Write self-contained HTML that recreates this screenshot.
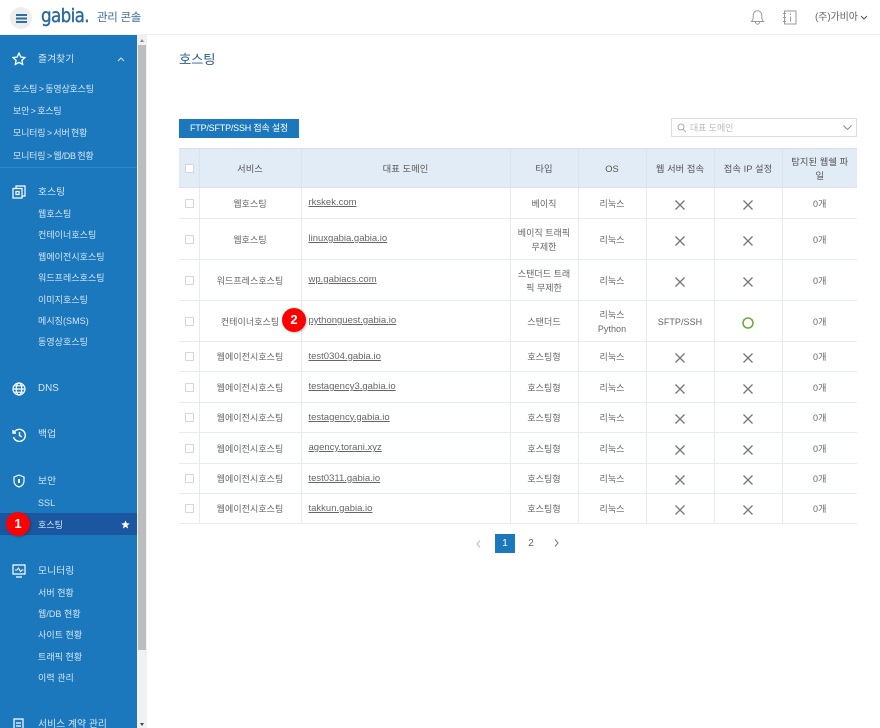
<!DOCTYPE html>
<html lang="ko"><head><meta charset="utf-8"><title>호스팅</title>
<style>
*{box-sizing:border-box}
html,body{margin:0;padding:0;width:880px;height:728px;overflow:hidden;background:#fff;font-family:"Liberation Sans","Noto Sans CJK KR",sans-serif;color:#555;font-size:9px}
.a{position:absolute;white-space:nowrap}
#top{position:absolute;left:0;top:0;width:880px;height:35px;background:#fff;border-bottom:1px solid #f0f0f0}
#side{position:absolute;left:0;top:35px;width:137px;height:693px;background:#1b78bc;overflow:hidden}
.s{position:absolute;color:#d4e6f4;font-size:9px;line-height:12px;white-space:nowrap;letter-spacing:.05px;margin-top:1px}
.f{word-spacing:-.8px;letter-spacing:-.2px}
.h{font-size:9.800px}
#sb{position:absolute;left:137px;top:35px;width:10px;height:693px;background:#f1f1f1}
#sb i{position:absolute;left:1px;top:10px;width:8px;height:605px;background:#bdbdbd}
table{position:absolute;left:179px;top:148px;width:678px;border-collapse:collapse;table-layout:fixed;border-top:1px solid #d8e1ea}
td,th{border:1px solid #e8ebef;border-top:0;padding:1px 4px 0;text-align:center;font-weight:400;font-size:9px;line-height:14px;color:#666;overflow:hidden;letter-spacing:.05px}
td:first-child,th:first-child{border-left:0;padding:0}
td:last-child,th:last-child{border-right:0}
th{background:#e2ecf6;color:#555;height:39px;border-color:#d8e3ee;padding:1px 4px 0;font-size:9.300px}
td.d{text-align:left;padding:0 7px;color:#666;font-size:9.500px;letter-spacing:0}
td.d u{position:relative;top:0;text-underline-offset:1px}
.c{display:block;width:9px;height:9px;margin:0 0 0 6px;border:1px solid #d6d6d6;border-radius:1px;background:#fff}
svg{display:block}
td svg{margin:2px auto 0}
.b{position:absolute;border-radius:50%;background:#f00;color:#fff;font:700 13px/24px "Liberation Sans",sans-serif;text-align:center;width:24px;height:24px;box-shadow:1px 1px 2px rgba(0,0,0,.25)}
</style></head><body>
<div id="top">
<div class="a" style="left:10px;top:7px;width:22px;height:22px;border-radius:50%;background:#eee"></div>
<div class="a" style="left:16px;top:14px;width:11px;height:1.500px;background:#2b6fa8;box-shadow:0 3.500px 0 #2b6fa8,0 7px 0 #2b6fa8"></div>
<div class="a" style="left:41px;top:4px;font:400 19px/24px 'DejaVu Sans',sans-serif;color:#2a6aa3;letter-spacing:-.7px;-webkit-text-stroke:.4px #2a6aa3;transform:scaleX(.88);transform-origin:left">gabia.</div>
<div class="a" style="left:97px;top:10px;font-size:11.500px;line-height:16px;color:#3d6f9c;letter-spacing:-.3px">관리 콘솔</div>
<svg class="a" style="left:750px;top:8px" width="15" height="18" viewBox="0 0 15 18" fill="none" stroke="#9a9a9a" stroke-width="1"><path d="M1.500 13.500c1.300-1.200 1.700-2 1.700-4.500V7a4.300 4.300 0 0 1 8.600 0v2c0 2.500.4 3.300 1.700 4.500z"/><path d="M5.500 14c0 3 4 3 4 0"/></svg>
<svg class="a" style="left:782px;top:10px" width="15" height="15" viewBox="0 0 15 15" fill="none" stroke="#9a9a9a" stroke-width="1"><path d="M2.500 1h11.500v13H2.500z"/><path d="M1 3.500h3M1 7.500h3M1 11.500h3M8.500 6.500v5M8.500 3.500v1.500"/></svg>
<div class="a" style="left:815px;top:11px;font-size:10px;line-height:14px;color:#666;letter-spacing:-.1px">(주)가비아</div>
<svg class="a" style="left:860px;top:15px" width="8" height="5" viewBox="0 0 8 5" fill="none" stroke="#555" stroke-width="1"><path d="M1 1l3 3 3-3"/></svg>
</div>
<div id="side">
<svg class="a" style="left:12px;top:17px" width="14" height="14" viewBox="0 0 14 14" fill="none" stroke="#fff" stroke-width="1.300"><path d="M7 1.200l1.800 3.800 4.100.5-3 2.800.8 4.100L7 10.400l-3.700 2 .8-4.100-3-2.800 4.100-.5z"/></svg>
<div class="s h" style="left:38px;top:18px">즐겨찾기</div>
<svg class="a" style="left:117px;top:22px" width="8" height="5" viewBox="0 0 8 5" fill="none" stroke="#d4e6f4" stroke-width="1"><path d="M1 4l3-3 3 3"/></svg>
<div class="s f" style="left:13px;top:47px">호스팅 &gt; 동영상호스팅</div>
<div class="s f" style="left:13px;top:69px">보안 &gt; 호스팅</div>
<div class="s f" style="left:13px;top:91px">모니터링 &gt; 서버 현황</div>
<div class="s f" style="left:13px;top:114px">모니터링 &gt; 웹/DB 현황</div>
<div class="a" style="left:0;top:132px;width:137px;height:1px;background:#2f86c4"></div>
<svg class="a" style="left:12px;top:150px" width="14" height="14" viewBox="0 0 14 14" fill="none" stroke="#fff" stroke-width="1.200"><path d="M4 3V1h9v10h-3"/><path d="M1 3.500h9v9.500H1z"/><path d="M4 6.500h3v3H4z"/></svg>
<div class="s h" style="left:38px;top:151px">호스팅</div>
<div class="s" style="left:38px;top:172px">웹호스팅</div>
<div class="s" style="left:38px;top:193px">컨테이너호스팅</div>
<div class="s" style="left:38px;top:215px">웹에이전시호스팅</div>
<div class="s" style="left:38px;top:236px">워드프레스호스팅</div>
<div class="s" style="left:38px;top:258px">이미지호스팅</div>
<div class="s" style="left:38px;top:279px">메시징(SMS)</div>
<div class="s" style="left:38px;top:300px">동영상호스팅</div>
<svg class="a" style="left:12px;top:347px" width="14" height="14" viewBox="0 0 14 14" fill="none" stroke="#fff" stroke-width="1.200"><circle cx="7" cy="7" r="6"/><ellipse cx="7" cy="7" rx="2.800" ry="6"/><path d="M1 7h12M2 3.800h10M2 10.200h10"/></svg>
<div class="s h" style="left:38px;top:347px">DNS</div>
<svg class="a" style="left:12px;top:393px" width="14" height="14" viewBox="0 0 14 14" fill="none" stroke="#fff" stroke-width="1.400"><path d="M2 4.500A6 6 0 1 1 1.500 9"/><path d="M1 2v3h3M7.500 4v3.500l2.300 1.300"/></svg>
<div class="s h" style="left:38px;top:393px">백업</div>
<svg class="a" style="left:13px;top:439px" width="12" height="14" viewBox="0 0 12 14" fill="none" stroke="#fff" stroke-width="1.200"><path d="M6 1l5 2v4c0 3-2 5-5 6-3-1-5-3-5-6V3z"/><path d="M6 5v4" stroke-width="2"/></svg>
<div class="s h" style="left:38px;top:440px">보안</div>
<div class="s" style="left:38px;top:461px">SSL</div>
<div class="a" style="left:0;top:478px;width:137px;height:22px;background:#1b57a0"></div>
<div class="s" style="left:38px;top:483px">호스팅</div>
<svg class="a" style="left:121px;top:485px" width="9" height="9" viewBox="0 0 9 9" fill="#fff"><path d="M4.500.5l1.200 2.700 3 .3-2.300 2 .7 3-2.600-1.600L1.900 8.500l.7-3-2.300-2 3-.3z"/></svg>
<svg class="a" style="left:12px;top:529px" width="14" height="14" viewBox="0 0 14 14" fill="none" stroke="#fff" stroke-width="1.200"><path d="M1 1h12v9H1zM4 13h6"/><path d="M3 6h2l1.500-2 2 3.500L10 6h1.500" stroke-width="1"/></svg>
<div class="s h" style="left:38px;top:530px">모니터링</div>
<div class="s" style="left:38px;top:551px">서버 현황</div>
<div class="s" style="left:38px;top:572px">웹/DB 현황</div>
<div class="s" style="left:38px;top:593px">사이트 현황</div>
<div class="s" style="left:38px;top:615px">트래픽 현황</div>
<div class="s" style="left:38px;top:636px">이력 관리</div>
<svg class="a" style="left:13px;top:683px" width="12" height="14" viewBox="0 0 12 14" fill="none" stroke="#fff" stroke-width="1.200"><path d="M1 1h9v12H1zM3 5h5M3 8h5"/></svg>
<div class="s h" style="left:38px;top:683px">서비스 계약 관리</div>
</div>
<div id="sb"><i></i>
<div class="a" style="left:3px;top:4px;border:2px solid transparent;border-bottom:3px solid #888;border-top:0"></div>
<div class="a" style="left:3px;top:688px;border:2px solid transparent;border-top:3px solid #444;border-bottom:0"></div>
</div>
<div class="a" style="left:179px;top:51px;font-size:13.300px;line-height:18px;color:#2a5d8f;letter-spacing:-.1px">호스팅</div>
<div class="a" style="left:179px;top:119px;width:120px;height:19px;background:#1b78bc;color:#fff;font-size:9px;line-height:19px;text-align:center;letter-spacing:-.2px">FTP/SFTP/SSH 접속 설정</div>
<div class="a" style="left:671px;top:118px;width:186px;height:19px;border:1px solid #ddd;background:#fff"></div>
<svg class="a" style="left:677px;top:123px" width="10" height="10" viewBox="0 0 10 10" fill="none" stroke="#aaa" stroke-width="1"><circle cx="4" cy="4" r="3"/><path d="M6.300 6.300L9 9"/></svg>
<div class="a" style="left:690px;top:121px;color:#bbb;font-size:9px;line-height:14px;letter-spacing:-.1px">대표 도메인</div>
<svg class="a" style="left:843px;top:125px" width="9" height="5" viewBox="0 0 9 5" fill="none" stroke="#888" stroke-width="1"><path d="M.5.500l4 4 4-4"/></svg>
<table><colgroup><col style="width:20px"><col style="width:102px"><col style="width:209px"><col style="width:68px"><col style="width:68px"><col style="width:68px"><col style="width:68px"><col style="width:75px"></colgroup>
<tr><th><span class="c"></span></th><th>서비스</th><th>대표 도메인</th><th>타입</th><th>OS</th><th>웹 서버 접속</th><th>접속 IP 설정</th><th>탐지된 웹쉘 파<br>일</th></tr>
<tr style="height:31px"><td><span class="c"></span></td><td>웹호스팅</td><td class="d"><u>rkskek.com</u></td><td>베이직</td><td>리눅스</td><td><svg width="10" height="10" viewBox="0 0 10 10" stroke="#777" stroke-width="1.300"><path d="M.5.500l9 9M9.500.500l-9 9"/></svg></td><td><svg width="10" height="10" viewBox="0 0 10 10" stroke="#777" stroke-width="1.300"><path d="M.5.500l9 9M9.500.500l-9 9"/></svg></td><td>0개</td></tr>
<tr style="height:41px"><td><span class="c"></span></td><td>웹호스팅</td><td class="d"><u>linuxgabia.gabia.io</u></td><td>베이직 트래픽 무제한</td><td>리눅스</td><td><svg width="10" height="10" viewBox="0 0 10 10" stroke="#777" stroke-width="1.300"><path d="M.5.500l9 9M9.500.500l-9 9"/></svg></td><td><svg width="10" height="10" viewBox="0 0 10 10" stroke="#777" stroke-width="1.300"><path d="M.5.500l9 9M9.500.500l-9 9"/></svg></td><td>0개</td></tr>
<tr style="height:41px"><td><span class="c"></span></td><td>워드프레스호스팅</td><td class="d"><u>wp.gabiacs.com</u></td><td>스탠더드 트래픽 무제한</td><td>리눅스</td><td><svg width="10" height="10" viewBox="0 0 10 10" stroke="#777" stroke-width="1.300"><path d="M.5.500l9 9M9.500.500l-9 9"/></svg></td><td><svg width="10" height="10" viewBox="0 0 10 10" stroke="#777" stroke-width="1.300"><path d="M.5.500l9 9M9.500.500l-9 9"/></svg></td><td>0개</td></tr>
<tr style="height:41px"><td><span class="c"></span></td><td>컨테이너호스팅</td><td class="d"><u>pythonguest.gabia.io</u></td><td>스탠더드</td><td>리눅스<br>Python</td><td>SFTP/SSH</td><td><svg width="12" height="12" viewBox="0 0 12 12" fill="none" stroke="#6fac3e" stroke-width="1.600"><circle cx="6" cy="6" r="5"/></svg></td><td>0개</td></tr>
<tr style="height:30px"><td><span class="c"></span></td><td>웹에이전시호스팅</td><td class="d"><u>test0304.gabia.io</u></td><td>호스팅형</td><td>리눅스</td><td><svg width="10" height="10" viewBox="0 0 10 10" stroke="#777" stroke-width="1.300"><path d="M.5.500l9 9M9.500.500l-9 9"/></svg></td><td><svg width="10" height="10" viewBox="0 0 10 10" stroke="#777" stroke-width="1.300"><path d="M.5.500l9 9M9.500.500l-9 9"/></svg></td><td>0개</td></tr>
<tr style="height:31px"><td><span class="c"></span></td><td>웹에이전시호스팅</td><td class="d"><u>testagency3.gabia.io</u></td><td>호스팅형</td><td>리눅스</td><td><svg width="10" height="10" viewBox="0 0 10 10" stroke="#777" stroke-width="1.300"><path d="M.5.500l9 9M9.500.500l-9 9"/></svg></td><td><svg width="10" height="10" viewBox="0 0 10 10" stroke="#777" stroke-width="1.300"><path d="M.5.500l9 9M9.500.500l-9 9"/></svg></td><td>0개</td></tr>
<tr style="height:30px"><td><span class="c"></span></td><td>웹에이전시호스팅</td><td class="d"><u>testagency.gabia.io</u></td><td>호스팅형</td><td>리눅스</td><td><svg width="10" height="10" viewBox="0 0 10 10" stroke="#777" stroke-width="1.300"><path d="M.5.500l9 9M9.500.500l-9 9"/></svg></td><td><svg width="10" height="10" viewBox="0 0 10 10" stroke="#777" stroke-width="1.300"><path d="M.5.500l9 9M9.500.500l-9 9"/></svg></td><td>0개</td></tr>
<tr style="height:31px"><td><span class="c"></span></td><td>웹에이전시호스팅</td><td class="d"><u>agency.torani.xyz</u></td><td>호스팅형</td><td>리눅스</td><td><svg width="10" height="10" viewBox="0 0 10 10" stroke="#777" stroke-width="1.300"><path d="M.5.500l9 9M9.500.500l-9 9"/></svg></td><td><svg width="10" height="10" viewBox="0 0 10 10" stroke="#777" stroke-width="1.300"><path d="M.5.500l9 9M9.500.500l-9 9"/></svg></td><td>0개</td></tr>
<tr style="height:30px"><td><span class="c"></span></td><td>웹에이전시호스팅</td><td class="d"><u>test0311.gabia.io</u></td><td>호스팅형</td><td>리눅스</td><td><svg width="10" height="10" viewBox="0 0 10 10" stroke="#777" stroke-width="1.300"><path d="M.5.500l9 9M9.500.500l-9 9"/></svg></td><td><svg width="10" height="10" viewBox="0 0 10 10" stroke="#777" stroke-width="1.300"><path d="M.5.500l9 9M9.500.500l-9 9"/></svg></td><td>0개</td></tr>
<tr style="height:30px"><td><span class="c"></span></td><td>웹에이전시호스팅</td><td class="d"><u>takkun.gabia.io</u></td><td>호스팅형</td><td>리눅스</td><td><svg width="10" height="10" viewBox="0 0 10 10" stroke="#777" stroke-width="1.300"><path d="M.5.500l9 9M9.500.500l-9 9"/></svg></td><td><svg width="10" height="10" viewBox="0 0 10 10" stroke="#777" stroke-width="1.300"><path d="M.5.500l9 9M9.500.500l-9 9"/></svg></td><td>0개</td></tr>
</table>
<svg class="a" style="left:476px;top:540px" width="5" height="8" viewBox="0 0 5 8" fill="none" stroke="#bbb" stroke-width="1"><path d="M4 .5L1 4l3 3.500"/></svg>
<div class="a" style="left:495px;top:534px;width:20px;height:19px;background:#1b78bc;color:#fff;text-align:center;line-height:20px;font-size:10px">1</div>
<div class="a" style="left:521px;top:534px;width:20px;height:19px;color:#666;text-align:center;line-height:20px;font-size:10px">2</div>
<svg class="a" style="left:554px;top:539px" width="5" height="8" viewBox="0 0 5 8" fill="none" stroke="#777" stroke-width="1"><path d="M1 .5L4 4 1 7.500"/></svg>
<div class="b" style="left:6px;top:512px">1</div>
<div class="b" style="left:282px;top:308px">2</div>
</body></html>
